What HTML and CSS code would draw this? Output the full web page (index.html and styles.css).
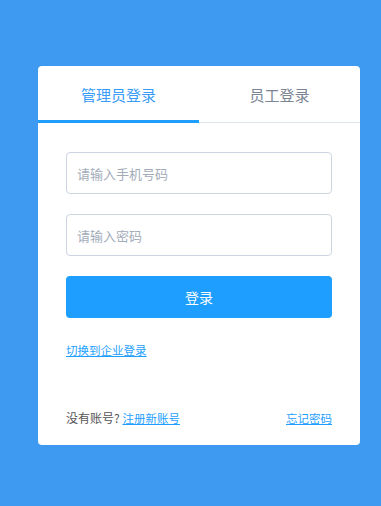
FILE: index.html
```html
<!DOCTYPE html>
<html lang="zh-CN">
<head>
<meta charset="utf-8">
<title>登录</title>
<link rel="stylesheet" href="styles.css">
</head>
<body>
<div class="card">
  <div class="tabs">
    <div class="tab active">管理员登录</div>
    <div class="tab">员工登录</div>
  </div>
  <form class="form">
    <input class="field" type="text" placeholder="请输入手机号码">
    <input class="field" type="password" placeholder="请输入密码">
    <button class="btn" type="button">登录</button>
    <a class="link switch" href="#">切换到企业登录</a>
  </form>
  <div class="footer">
    <div class="left">没有账号? <a class="link" href="#">注册新账号</a></div>
    <a class="link" href="#">忘记密码</a>
  </div>
</div>
</body>
</html>
```
FILE: styles.css
```css
html, body {
  margin: 0;
  padding: 0;
}
body {
  background: #3d9af0;
  width: 381px;
  height: 506px;
  font-family: "Noto Sans CJK SC", "Noto Sans", sans-serif;
  padding: 66px 0 0 38px;
  box-sizing: border-box;
}
.card {
  width: 322px;
  height: 379px;
  background: #fff;
  border-radius: 4px;
  display: flex;
  flex-direction: column;
  box-sizing: border-box;
}
.tabs {
  display: flex;
  height: 57px;
  border-bottom: 1px solid #dde5ee;
  box-sizing: border-box;
}
.tab {
  flex: 1;
  display: flex;
  align-items: center;
  justify-content: center;
  font-size: 15px;
  color: #7b8594;
  position: relative;
}
.tab.active {
  color: #3a9cf6;
}
.tab.active::after {
  content: "";
  position: absolute;
  left: 0;
  right: 0;
  bottom: -1px;
  height: 3px;
  background: #1e9fff;
}
.form {
  display: flex;
  flex-direction: column;
  padding: 29px 28px 0 28px;
  margin: 0;
}
.field {
  height: 42px;
  border: 1px solid #cbd5e1;
  border-radius: 4px;
  padding: 0 10px;
  margin: 0 0 20px 0;
  font-family: inherit;
  font-size: 13px;
  color: #333;
  outline: none;
  box-sizing: border-box;
}
.field::placeholder {
  color: #a3acb9;
}
.btn {
  height: 42px;
  border: none;
  border-radius: 4px;
  background: #1e9fff;
  color: #fff;
  font-family: inherit;
  font-size: 14px;
  margin: 0;
  padding: 0;
}
.link {
  color: #1e9fff;
  font-size: 11.5px;
  text-decoration: underline;
}
.switch {
  align-self: flex-start;
  margin-top: 24px;
  line-height: 17px;
}
.footer {
  margin-top: auto;
  display: flex;
  justify-content: space-between;
  align-items: center;
  padding: 0 28px 18px 28px;
  font-size: 12px;
  line-height: 17px;
  color: #555;
}
```
